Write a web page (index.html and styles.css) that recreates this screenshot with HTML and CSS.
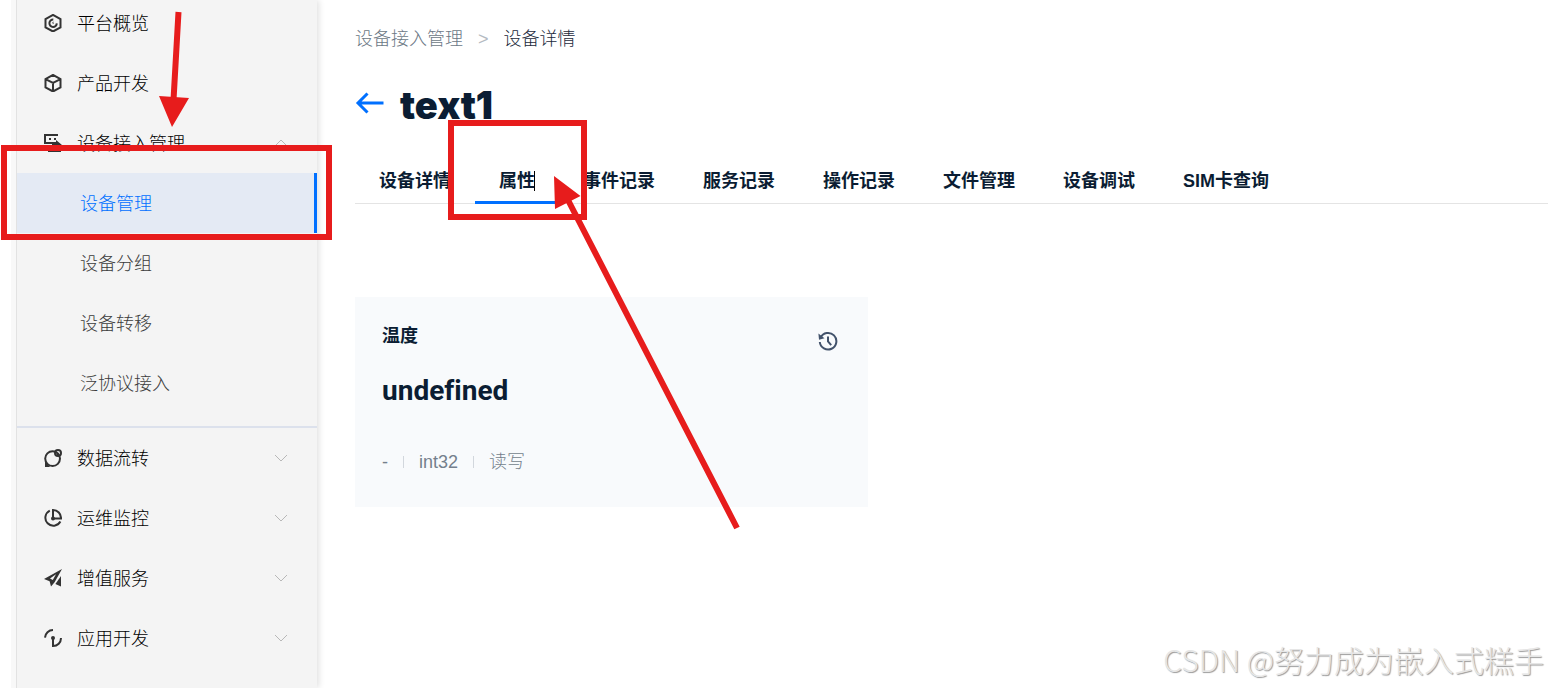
FILE: index.html
```html
<!DOCTYPE html>
<html lang="zh-CN">
<head>
<meta charset="utf-8">
<title>设备详情</title>
<link rel="stylesheet" href="styles.css">
</head>
<body>
<div class="app">
  <nav class="sidebar" aria-label="主菜单">
    <div class="menu">
      <a class="menu-item" href="#">
        <svg class="icon" viewBox="0 0 18 18"><path d="M9 .9 16.500 5v8.400L9 17.500 1.500 13.400V5z"/><path d="M9.300 5.600A3.700 3.700 0 1 0 12.800 9.400"/><path d="M9.300 7.800a1.500 1.500 0 0 0 0 2" stroke-width="1"/></svg>
        <span>平台概览</span>
      </a>
      <a class="menu-item" href="#">
        <svg class="icon" viewBox="0 0 18 18"><path d="M9 .9 16.500 5v8.400L9 17.500 1.500 13.400V5zM2 5.400 9 9l7-3.600M9 9v8"/></svg>
        <span>产品开发</span>
      </a>
      <button class="menu-item" type="button" aria-expanded="true">
        <svg class="icon" viewBox="0 0 18 18"><path d="M14 1H1v8h8M4 17h13"/><path class="fill" d="M5 4h2v2H5zM10 4h2v2h-2zM12 6l6 5H8V8h4z"/></svg>
        <span>设备接入管理</span>
        <svg class="chevron" viewBox="0 0 14 8"><path d="M1 7l6-6 6 6"/></svg>
      </button>
      <div class="submenu">
        <a class="submenu-item is-active" href="#" aria-current="page">设备管理</a>
        <a class="submenu-item" href="#">设备分组</a>
        <a class="submenu-item" href="#">设备转移</a>
        <a class="submenu-item" href="#">泛协议接入</a>
      </div>
      <button class="menu-item" type="button">
        <svg class="icon" viewBox="0 0 18 18"><circle cx="8.6" cy="9.6" r="7.4"/><circle cx="14" cy="4" r="3"/><path class="fill" d="M1 12l5 6H1zM12.500 4h2v2h-2z"/></svg>
        <span>数据流转</span>
        <svg class="chevron" viewBox="0 0 14 8"><path d="M1 1l6 6 6-6"/></svg>
      </button>
      <button class="menu-item" type="button">
        <svg class="icon" viewBox="0 0 18 18"><path d="M5.800 1.600A8 8 0 1 0 16.400 12.600M9 1v8.400h8A8 8 0 0 0 9 1z"/><circle class="fill" cx="9" cy="9.400" r="2"/></svg>
        <span>运维监控</span>
        <svg class="chevron" viewBox="0 0 14 8"><path d="M1 1l6 6 6-6"/></svg>
      </button>
      <button class="menu-item" type="button">
        <svg class="icon" viewBox="0 0 18 18"><path class="fill" fill-rule="evenodd" d="M18 0 0 10l5.600 2.200L7 17.600l3.600-4.400zM12 5.200 8.800 11 6 9.600z"/><path class="fill" d="M17 7v10.600L11.400 15z"/></svg>
        <span>增值服务</span>
        <svg class="chevron" viewBox="0 0 14 8"><path d="M1 1l6 6 6-6"/></svg>
      </button>
      <button class="menu-item" type="button">
        <svg class="icon" viewBox="0 0 18 18"><path d="M1 8.600A8 8 0 0 1 9 1M9 9v8c4.600 0 8-3.400 8-8"/><circle class="fill" cx="9" cy="9" r="2"/></svg>
        <span>应用开发</span>
        <svg class="chevron" viewBox="0 0 14 8"><path d="M1 1l6 6 6-6"/></svg>
      </button>
    </div>
  </nav>

  <main class="content">
    <nav class="breadcrumb" aria-label="面包屑">
      <a href="#">设备接入管理</a>
      <span class="separator">&gt;</span>
      <span>设备详情</span>
    </nav>
    <header class="page-head">
      <button class="back" type="button" aria-label="返回">
        <svg viewBox="0 0 28 22"><path d="M28 11H3M12 1.500 2.500 11 12 20.500"/></svg>
      </button>
      <h1>text1</h1>
    </header>
    <div class="tabs" role="tablist">
      <button type="button" role="tab">设备详情</button>
      <button class="is-active" type="button" role="tab" aria-selected="true"><span class="caret">属性</span></button>
      <button type="button" role="tab">事件记录</button>
      <button type="button" role="tab">服务记录</button>
      <button type="button" role="tab">操作记录</button>
      <button type="button" role="tab">文件管理</button>
      <button type="button" role="tab">设备调试</button>
      <button type="button" role="tab">SIM卡查询</button>
    </div>
    <article class="card">
      <div class="card-head">
        <h2>温度</h2>
        <button class="history" type="button" aria-label="历史记录">
          <svg viewBox="0 0 20 20"><path d="M2.600 6.600A8.300 8.300 0 1 1 1.800 11M10 5.500v5l3.200 3.700"/><path class="fill" d="M.4 2.400 6.500 7.200 1 8.800z"/></svg>
        </button>
      </div>
      <p class="value">undefined</p>
      <div class="meta">
        <span>-</span><span>int32</span><span>读写</span>
      </div>
    </article>
  </main>
</div>

<div class="mark mark-menu"></div>
<div class="mark mark-tab"></div>
<svg class="arrows" width="760" height="540" viewBox="0 0 760 540" aria-hidden="true">
  <path class="shaft" d="M178.500 12 173.500 100M737 528 568 200"/>
  <path class="tip" d="M159 96l30 2-17 29zM554 176l26.500 20L555 209z"/>
</svg>
<div class="watermark">CSDN @努力成为嵌入式糕手</div>
</body>
</html>
```
FILE: styles.css
```css
* { box-sizing: border-box; }

body {
  margin: 0;
  background: #fff;
  color: #0b1d33;
  font-family: "Liberation Sans", "Noto Sans CJK SC", sans-serif;
  font-size: 18px;
  line-height: 24px;
  overflow: hidden;
}

button {
  padding: 0;
  border: 0;
  background: none;
  color: inherit;
  font: inherit;
  cursor: pointer;
}

a { color: inherit; text-decoration: none; }

h1, h2, p { margin: 0; }

svg { fill: none; stroke: currentColor; flex: none; }

.fill { fill: currentColor; stroke: none; }

.app {
  display: flex;
  height: 100vh;
  padding-left: 11px;
}

/* Sidebar */
.sidebar {
  flex: none;
  width: 306px;
  padding-left: 5px;
  background: #f8f8f8;
  box-shadow: 2px 0 6px rgba(0, 0, 0, 0.12);
  clip-path: inset(0 -10px 0 0);
}

.menu {
  height: 100%;
  border-left: 1px solid #e2e2e2;
  background: #f4f4f4;
  overflow: hidden;
  font-weight: 300;
}

.menu > :first-child { margin-top: -7px; }

.menu-item {
  display: flex;
  align-items: center;
  gap: 15px;
  width: 100%;
  height: 60px;
  padding: 0 29px 0 27px;
  color: #000;
  text-align: left;
}

.menu-item span { padding-top: 2px; }

.icon {
  width: 18px;
  height: 18px;
  color: #333;
  stroke-width: 2;
}

.chevron {
  width: 14px;
  height: 8px;
  margin-left: auto;
  color: #b8b8b8;
}

.submenu {
  padding-bottom: 13px;
  border-bottom: 2px solid #dce1ec;
}

.submenu-item {
  display: flex;
  align-items: center;
  height: 60px;
  padding: 2px 0 0 63px;
  color: #3c3c3c;
}

.submenu-item.is-active {
  border-right: 3px solid #0070ff;
  background: #e4eaf4;
  color: #0070ff;
}

/* Content */
.content {
  flex: 1;
  min-width: 0;
  padding: 27px 0 0 38px;
}

.breadcrumb {
  display: flex;
  gap: 15px;
  color: #1c2a3c;
  font-weight: 300;
  white-space: nowrap;
}

.breadcrumb a { color: #6c7885; }

.separator { color: #b4bac1; }

.page-head {
  display: flex;
  align-items: center;
  gap: 16px;
  margin-top: 32px;
  height: 44px;
}

.back {
  display: flex;
  padding-bottom: 4px;
  color: #0070ff;
}

.back svg {
  width: 29px;
  height: 22px;
  stroke-width: 3;
}

h1 {
  font-family: Inter, "Liberation Sans", sans-serif;
  font-size: 38px;
  line-height: 44px;
  font-weight: 900;
}

.tabs {
  display: flex;
  margin-top: 29px;
  border-bottom: 1px solid #e4e4e4;
  font-weight: 700;
  white-space: nowrap;
}

.tabs button {
  height: 48px;
  margin-bottom: -1px;
  padding: 4px 24px 0;
  border-bottom: 3px solid transparent;
}

.tabs .is-active { border-color: #0070ff; }

.caret {
  display: block;
  position: relative;
}

.caret::after {
  content: "";
  position: absolute;
  top: 2px;
  right: 0;
  width: 1px;
  height: 20px;
  background: #000;
}

.card {
  width: 43%;
  margin-top: 93px;
  padding: 27px;
  background: #f8fafc;
}

.card-head {
  display: flex;
  justify-content: space-between;
}

h2 {
  font-size: 18px;
  line-height: 24px;
  font-weight: 700;
}

.history {
  display: flex;
  padding: 7px 3px 0 0;
  color: #42526b;
}

.history svg {
  width: 20px;
  height: 20px;
  stroke-width: 2;
}

.value {
  margin-top: 20px;
  font-family: Roboto, "Liberation Sans", sans-serif;
  font-size: 28px;
  line-height: 40px;
  font-weight: 700;
  font-variant-ligatures: none;
}

.meta {
  display: flex;
  align-items: center;
  margin-top: 39px;
  padding-bottom: 6px;
  color: #747f8c;
  font-weight: 300;
}

.meta span + span {
  display: flex;
  align-items: center;
}

.meta span + span::before {
  content: "";
  width: 1px;
  height: 12px;
  margin: 0 15px;
  background: #d2d7dd;
}

/* Annotations */
.mark {
  position: absolute;
  border: 6px solid #e71c1c;
}

.mark-menu {
  top: 145px;
  left: 1px;
  width: 331px;
  height: 95px;
}

.mark-tab {
  top: 120px;
  left: 448px;
  width: 139px;
  height: 100px;
}

.arrows {
  position: absolute;
  top: 0;
  left: 0;
  pointer-events: none;
}

.shaft { stroke: #e71c1c; stroke-width: 6; }

.tip { fill: #e71c1c; stroke: none; }

.watermark {
  position: absolute;
  right: 4px;
  bottom: 9px;
  color: #e6e6e6;
  font-family: "Noto Sans CJK SC", sans-serif;
  font-size: 30px;
  line-height: 40px;
  font-weight: 300;
  text-shadow: 1px 1px 1px #999;
  white-space: nowrap;
}
```
